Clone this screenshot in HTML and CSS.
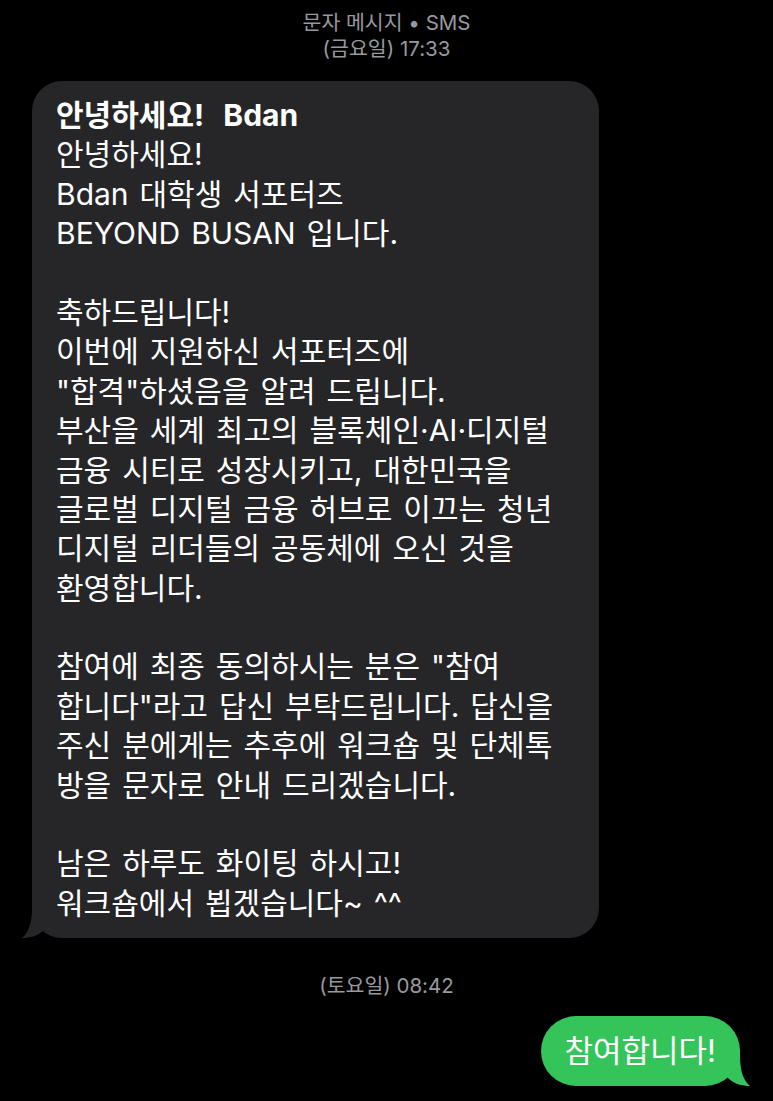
FILE: index.html
```html
<!DOCTYPE html>
<html lang="ko">
<head>
<meta charset="utf-8">
<title>문자 메시지</title>
<link rel="stylesheet" href="styles.css">
</head>
<body>
<main class="screen">
  <header class="thread-head">
    <div class="meta-line">문자 메시지 • SMS</div>
    <div class="meta-line">(금요일) 17:33</div>
  </header>

  <section class="row row-in">
    <div class="bubble bubble-in">
      <div class="ln ln-title">안녕하세요!&nbsp; Bdan</div>
      <div class="ln">안녕하세요!</div>
      <div class="ln">Bdan 대학생 서포터즈</div>
      <div class="ln">BEYOND BUSAN 입니다.</div>
      <div class="ln"></div>
      <div class="ln">축하드립니다!</div>
      <div class="ln">이번에 지원하신 서포터즈에</div>
      <div class="ln">"합격"하셨음을 알려 드립니다.</div>
      <div class="ln">부산을 세계 최고의 블록체인·AI·디지털</div>
      <div class="ln">금융 시티로 성장시키고, 대한민국을</div>
      <div class="ln">글로벌 디지털 금융 허브로 이끄는 청년</div>
      <div class="ln">디지털 리더들의 공동체에 오신 것을</div>
      <div class="ln">환영합니다.</div>
      <div class="ln"></div>
      <div class="ln">참여에 최종 동의하시는 분은 "참여</div>
      <div class="ln">합니다"라고 답신 부탁드립니다. 답신을</div>
      <div class="ln">주신 분에게는 추후에 워크숍 및 단체톡</div>
      <div class="ln">방을 문자로 안내 드리겠습니다.</div>
      <div class="ln"></div>
      <div class="ln">남은 하루도 화이팅 하시고!</div>
      <div class="ln">워크숍에서 뵙겠습니다~ ^^</div>
      <svg class="tail tail-in" viewBox="0 0 30 36" width="30" height="36" aria-hidden="true">
        <path d="M10 0 L10 6 C10 22 6 31 0 36 C8 36 15 34 21 29 L30 20 L30 0 Z"/>
      </svg>
    </div>
  </section>

  <div class="stamp">(토요일) 08:42</div>

  <section class="row row-out">
    <div class="bubble bubble-out">참여합니다!
      <svg class="tail tail-out" viewBox="0 0 30 36" width="30" height="36" aria-hidden="true">
        <path d="M10 0 L10 6 C10 22 6 31 0 36 C8 36 15 34 21 29 L30 20 L30 0 Z"/>
      </svg>
    </div>
  </section>
</main>
</body>
</html>
```

FILE: styles.css
```css
html, body {
  margin: 0;
  padding: 0;
  background: #000;
}

body {
  font-family: "Inter", "Noto Sans CJK KR", sans-serif;
  color: #fff;
}

.screen {
  width: 773px;
  min-height: 1101px;
  display: flex;
  flex-direction: column;
}

.thread-head {
  padding-top: 10px;
  text-align: center;
  color: #98989e;
  font-size: 20.5px;
  line-height: 26px;
}

.row {
  display: flex;
}

.row-in {
  justify-content: flex-start;
  padding-left: 32px;
  margin-top: 19px;
}

.row-out {
  justify-content: flex-end;
  padding-right: 33px;
  margin-top: 17px;
}

.bubble {
  position: relative;
  box-sizing: border-box;
}

.bubble-in {
  width: 567px;
  background: #262628;
  border-radius: 30px;
  padding: 15px 12px 15px 24px;
  font-size: 30px;
  word-spacing: 2.5px;
}

.ln {
  height: 39.4px;
  line-height: 39.4px;
  white-space: nowrap;
}

.ln-title {
  font-weight: 700;
}

.tail {
  position: absolute;
  bottom: 0;
  display: block;
}

.tail-in {
  left: -10px;
  fill: #262628;
}

.stamp {
  margin-top: 35px;
  text-align: center;
  color: #98989e;
  font-size: 20.5px;
  line-height: 26px;
}

.bubble-out {
  background: #35c45a;
  border-radius: 35px;
  height: 70px;
  padding: 0 24px 0 23px;
  font-size: 31px;
  line-height: 70px;
  white-space: nowrap;
}

.tail-out {
  right: -10px;
  fill: #35c45a;
  transform: scaleX(-1);
}
```
